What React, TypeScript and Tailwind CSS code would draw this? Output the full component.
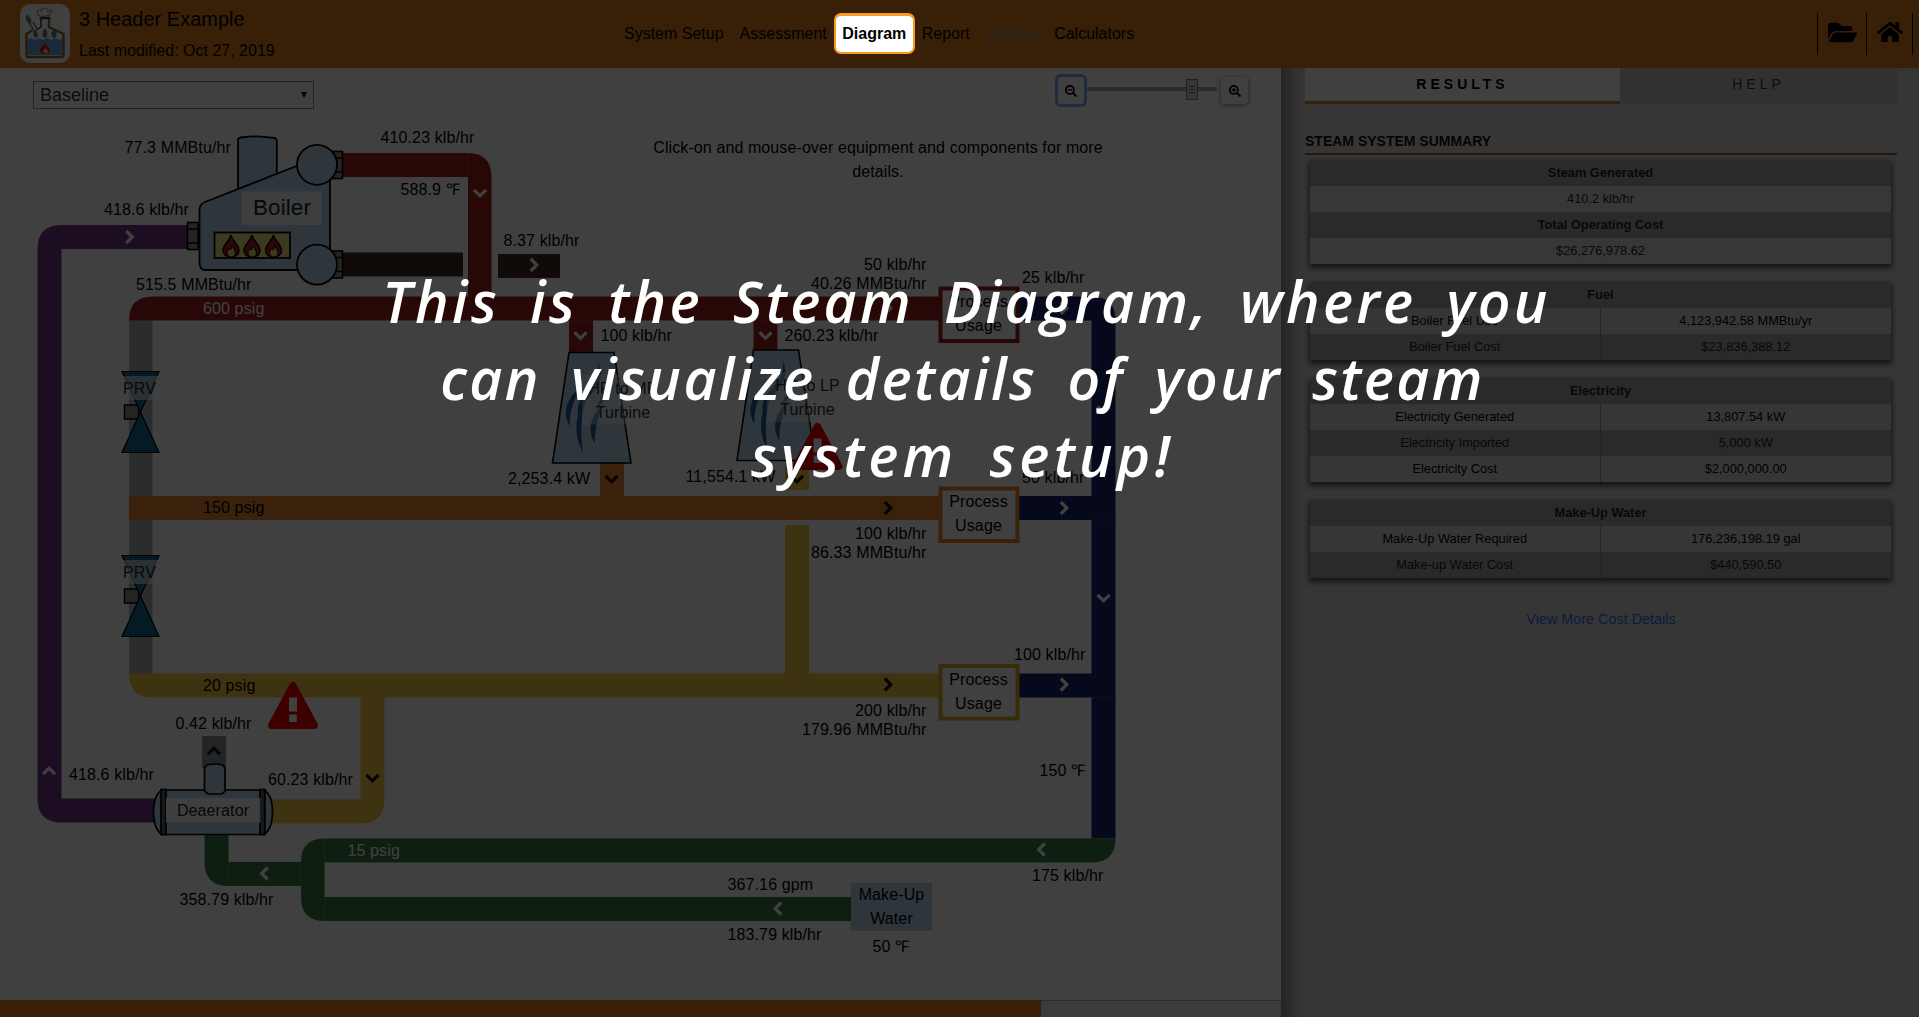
import React from "react";
import { FaFolderOpen, FaHome, FaSearchMinus, FaSearchPlus } from "react-icons/fa";

const RED = "#a0201a";
const PURPLE = "#70348a";
const YELLOW = "#f8cc40";
const ORANGE = "#e8852c";
const NAVY = "#1a2570";
const GREEN = "#387c44";
const BROWN = "#402c20";
const GREY = "#a8b0b5";
const STEEL = "#b6d5ee";

type Dir = "up" | "down" | "left" | "right";
const rotation: Record<Dir, number> = { right: 0, down: 90, left: 180, up: 270 };

function Chevron({ x, y, dir, dark }: { x: number; y: number; dir: Dir; dark?: boolean }) {
  return (
    <path
      d="M-3.2 -6 L2.8 0 L-3.2 6"
      transform={`translate(${x} ${y}) rotate(${rotation[dir]})`}
      fill="none"
      stroke={dark ? "#111" : "#fff"}
      strokeWidth={3.2}
    />
  );
}

function Label({
  x,
  y,
  children,
  anchor = "start",
  fill = "#000",
  size = 16,
}: {
  x: number;
  y: number;
  children: React.ReactNode;
  anchor?: "start" | "middle" | "end";
  fill?: string;
  size?: number;
}) {
  return (
    <text x={x} y={y + size * 0.33} textAnchor={anchor} fill={fill} fontSize={size} letterSpacing={0.12}>
      {children}
    </text>
  );
}

function Valve({ y }: { y: number }) {
  return (
    <g transform={`translate(140.5 ${y})`}>
      <rect x={-16} y={-7} width={14} height={14} fill="#909090" stroke="#000" strokeWidth={1.5} />
      <path d="M-18.5 -40.5H18.5L0 0Z" fill="#1a6898" stroke="#000" strokeWidth={1.2} />
      <path d="M-18.5 40.5H18.5L0 0Z" fill="#1a6898" stroke="#000" strokeWidth={1.2} />
      <rect x={-19} y={-36} width={37} height={24} fill="#fff" fillOpacity={0.6} />
      <Label x={-1} y={-23.5} anchor="middle" fill="#222">
        PRV
      </Label>
    </g>
  );
}

function Turbine({ x, y, name }: { x: number; y: number; name: string }) {
  return (
    <g transform={`translate(${x} ${y})`}>
      <path d="M17 .5H62L79 111H.5Z" fill={STEEL} stroke="#000" strokeWidth={1.6} />
      <g fill="#1d5c94">
        <path d="M46 10C52 24 47 34 39 43C31 52 26 60 29 70C22 56 28 47 35 39C43 30 49 22 46 10Z" />
        <path d="M27 36C16 46 9 60 18 74C17 60 22 50 27 36Z" />
        <path d="M33 50C22 64 22 84 31 100C28 82 29 66 33 50Z" />
        <path d="M50 53C37 66 36 80 43 91C42 78 46 68 50 53Z" />
        <path d="M54 28C58 40 52 50 44 58C46 48 54 42 54 28Z" />
      </g>
      <rect x={30} y={22.5} width={84} height={50} fill="#fff" fillOpacity={0.42} />
      <Label x={71} y={36.5} anchor="middle" fill="#333">
        {name}
      </Label>
      <Label x={71} y={60.5} anchor="middle" fill="#333">
        Turbine
      </Label>
    </g>
  );
}

function Warning({ x, y }: { x: number; y: number }) {
  return (
    <g transform={`translate(${x} ${y})`}>
      <path d="M0 3L21.5 43H-21.5Z" fill="#f00000" stroke="#f00000" strokeWidth={7} strokeLinejoin="round" />
      <rect x={-4} y={15} width={8} height={14} fill="#fff" />
      <rect x={-3.8} y={32} width={7.6} height={7.5} fill="#fff" />
    </g>
  );
}

function Process({ y, color }: { y: number; color: string }) {
  return (
    <g>
      <rect x={940.5} y={y + 2} width={77} height={52.5} fill="#fff" stroke={color} strokeWidth={4} />
      <Label x={978.5} y={y + 15.5} anchor="middle">
        Process
      </Label>
      <Label x={978.5} y={y + 39.5} anchor="middle">
        Usage
      </Label>
    </g>
  );
}

function Flame({ x }: { x: number }) {
  return (
    <g transform={`translate(${x} 246)`}>
      <path
        d="M0 -11C1 -5 8 -2 8 5C8 9 4 11 0 11C-4 11 -8 9 -8 4C-8 -1 -2 -4 0 -11Z"
        fill="#a81c24"
        stroke="#000"
        strokeWidth={1.4}
      />
      <path d="M1 -1C2 2 4.5 4 4.5 7C4.5 10 2 11 0 11C-2 11 -4 9 -4 7C-4 5 -3 4 -2 3C-1 5 1 3 1 -1Z" fill="#f0e060" stroke="#000" strokeWidth={1} />
    </g>
  );
}

function Fitting({ x, y, w = 10.5 }: { x: number; y: number; w?: number }) {
  return (
    <g stroke="#000" strokeWidth={1.6} fill="#8a8f90">
      <rect x={x} y={y} width={w} height={27} />
      <path d={`M${x} ${y + 6.5}h${w}M${x} ${y + 20.5}h${w}`} />
    </g>
  );
}

function Boiler() {
  return (
    <g>
      <Fitting x={187.5} y={222.5} />
      <Fitting x={332} y={151.5} />
      <Fitting x={332} y={251} />
      <path d="M238 200V140Q238 138 241 137.5Q258 135 274 138Q276.8 138.5 276.8 141V190Z" fill={STEEL} stroke="#000" strokeWidth={1.8} />
      <path d="M205 202L317 158L330 175V262L310 270H206Q199.5 270 199.5 263V210Q199.5 204 205 202Z" fill={STEEL} stroke="#000" strokeWidth={1.8} />
      <circle cx={317} cy={164.8} r={20} fill={STEEL} stroke="#000" strokeWidth={1.8} />
      <circle cx={317} cy={264.6} r={20} fill={STEEL} stroke="#000" strokeWidth={1.8} />
      <rect x={214.5} y={232.5} width={75.5} height={25.5} fill="#f0e878" stroke="#000" strokeWidth={1.8} />
      <Flame x={231} />
      <Flame x={252} />
      <Flame x={273.5} />
      <rect x={242} y={191.5} width={80} height={33.5} fill="#fff" fillOpacity={0.8} />
      <Label x={282} y={208} anchor="middle" size={22.4} fill="#222">
        Boiler
      </Label>
    </g>
  );
}

function Deaerator() {
  return (
    <g stroke="#000" strokeWidth={1.7}>
      <path d="M160 790H264Q272.5 795 272.5 812Q272.5 829 264 834.5H162Q153.5 829 153.5 812Q153.5 795 162 790Z" fill={STEEL} />
      <rect x={161} y={789.5} width={5} height={45} fill="#586068" />
      <rect x={260} y={789.5} width={5} height={45} fill="#586068" />
      <path d="M207 765Q215 763 223 765L225 768V791L222 794H208L204.5 791V768Z" fill={STEEL} />
      <g stroke="none">
        <rect x={166} y={798} width={94.5} height={24.5} fill="#fff" fillOpacity={0.9} />
        <Label x={213} y={810.5} anchor="middle" fill="#222">
          Deaerator
        </Label>
      </g>
    </g>
  );
}

function SteamDiagram() {
  return (
    <svg className="absolute left-0 top-0 h-[949px] w-[1281px]" viewBox="0 68 1281 949" fontFamily='"Liberation Sans", Arial, sans-serif'>
      <g>
        <rect x={129} y={320} width={23.5} height={354} fill={GREY} />
        <path d="M187 225H61.5Q37.5 225 37.5 249V798.5Q37.5 822.5 61.5 822.5H154V798.5H61.5V249H187Z" fill={PURPLE} />
        <path d="M342 153H467.5Q491.5 153 491.5 177V297H468V177H342Z" fill={RED} />
        <rect x={342} y={252.5} width={121} height={24} fill={BROWN} />
        <rect x={498} y={254} width={62} height={24} fill={BROWN} />
        <path d="M940 296.5H153Q129 296.5 129 320.5H940Z" fill={RED} />
        <rect x={569} y={320} width={24} height={32} fill={RED} />
        <rect x={753.5} y={320} width={24} height={30} fill={RED} />
        <rect x={129} y={496} width={811} height={24} fill={ORANGE} />
        <rect x={600} y={463} width={24} height={34} fill={ORANGE} />
        <rect x={785} y={461} width={24} height={29} fill={YELLOW} />
        <rect x={785} y={525} width={24} height={149} fill={YELLOW} />
        <path d="M129 673.5H940V697.5H384.5V799.5Q384.5 823.5 360.5 823.5H272V799.5H360.5V697.5H153Q129 697.5 129 673.5Z" fill={YELLOW} />
        <rect x={202} y={736} width={24} height={32} fill="#8a9199" />
        <path d="M1018 296.5H1091.5Q1115.5 296.5 1115.5 320.5V838.5H1091.5V697.5H1018V673.5H1091.5V520H1018V496H1091.5V320.5H1018Z" fill={NAVY} />
        <path
          fillRule="evenodd"
          d="M1115.5 838.5Q1115.5 862.5 1091.5 862.5H324.5V897H852V921H324.5Q301 921 301 897V886H228.5Q204.5 886 204.5 862V834H228.5V862H301Q301 838.5 324.5 838.5Z"
          fill={GREEN}
        />
        <g stroke="#fff" strokeOpacity={0.18} strokeWidth={0.8}>
          <path d="M61.3 225v24M61.3 798.5v24M467.8 153v24M129 320.3h811M1091.5 520h24M1091.5 697.5h24M228.5 862v24M301 862v24M324.5 838v24M324.5 897v24" />
        </g>
      </g>

      <Boiler />
      <Deaerator />
      <Valve y={412} />
      <Valve y={596} />
      <Turbine x={552} y={352} name="HP to MP" />
      <Turbine x={736.5} y={349.5} name="HP to LP" />
      <Process y={286.5} color={RED} />
      <Process y={486.5} color={ORANGE} />
      <Process y={664} color="#d8b020" />
      <rect x={851} y={883} width={81} height={48} fill={STEEL} />
      <Label x={891.5} y={895} anchor="middle">Make-Up</Label>
      <Label x={891.5} y={919} anchor="middle">Water</Label>

      <Chevron x={480} y={193} dir="down" />
      <Chevron x={129.5} y={237} dir="right" />
      <Chevron x={534} y={265} dir="right" />
      <Chevron x={49} y={771} dir="up" />
      <Chevron x={214} y={751} dir="up" dark />
      <Chevron x={372.5} y={778} dir="down" dark />
      <Chevron x={580.5} y={335.5} dir="down" />
      <Chevron x={765.5} y={335.5} dir="down" />
      <Chevron x={611.5} y={479} dir="down" dark />
      <Chevron x={797} y={479} dir="down" dark />
      <Chevron x={888} y={308} dir="right" />
      <Chevron x={888} y={508} dir="right" dark />
      <Chevron x={888} y={684.5} dir="right" dark />
      <Chevron x={1064} y={308} dir="right" />
      <Chevron x={1064} y={508} dir="right" />
      <Chevron x={1064} y={684.5} dir="right" />
      <Chevron x={1103.5} y={409.5} dir="down" />
      <Chevron x={1103.5} y={598} dir="down" />
      <Chevron x={264.5} y={873.5} dir="left" />
      <Chevron x={1041.5} y={849.5} dir="left" />
      <Chevron x={778} y={908.5} dir="left" />

      <Label x={124.5} y={147.5}>77.3 MMBtu/hr</Label>
      <Label x={104} y={210}>418.6 klb/hr</Label>
      <Label x={380.5} y={138}>410.23 klb/hr</Label>
      <Label x={400.5} y={190}>
        588.9 <tspan fontFamily='"Liberation Serif"'>℉</tspan>
      </Label>
      <Label x={503.5} y={241}>8.37 klb/hr</Label>
      <Label x={136} y={284.5}>515.5 MMBtu/hr</Label>
      <Label x={203} y={309} fill="#fff">600 psig</Label>
      <Label x={203} y={508}>150 psig</Label>
      <Label x={203} y={685.5}>20 psig</Label>
      <Label x={347.5} y={851} fill="#fff">15 psig</Label>
      <Label x={175.5} y={724}>0.42 klb/hr</Label>
      <Label x={69} y={774.5}>418.6 klb/hr</Label>
      <Label x={268} y={779.5}>60.23 klb/hr</Label>
      <Label x={179.5} y={899.5}>358.79 klb/hr</Label>
      <Label x={508} y={478.5}>2,253.4 kW</Label>
      <Label x={685.5} y={476.5}>11,554.1 kW</Label>
      <Label x={600.5} y={336}>100 klb/hr</Label>
      <Label x={784.5} y={336}>260.23 klb/hr</Label>
      <Label x={926.5} y={265} anchor="end">50 klb/hr</Label>
      <Label x={926.5} y={284} anchor="end">40.26 MMBtu/hr</Label>
      <Label x={926.5} y={533.5} anchor="end">100 klb/hr</Label>
      <Label x={926.5} y={552.5} anchor="end">86.33 MMBtu/hr</Label>
      <Label x={926.5} y={710.5} anchor="end">200 klb/hr</Label>
      <Label x={926.5} y={729.5} anchor="end">179.96 MMBtu/hr</Label>
      <Label x={1022} y={278}>25 klb/hr</Label>
      <Label x={1022} y={477.5}>50 klb/hr</Label>
      <Label x={1014} y={654.5}>100 klb/hr</Label>
      <Label x={1039.5} y={771}>
        150 <tspan fontFamily='"Liberation Serif"'>℉</tspan>
      </Label>
      <Label x={1032} y={875.5}>175 klb/hr</Label>
      <Label x={727.5} y={884.5}>367.16 gpm</Label>
      <Label x={727.5} y={934.5}>183.79 klb/hr</Label>
      <Label x={872.5} y={947}>
        50 <tspan fontFamily='"Liberation Serif"'>℉</tspan>
      </Label>
      <Warning x={293} y={682.5} />
      <Warning x={817.5} y={423.5} />
    </svg>
  );
}

function Logo() {
  return (
    <div className="mt-1 h-[59px] w-[50px] rounded-[10px] bg-white">
      <svg viewBox="0 0 50 59" className="h-full w-full">
        <path d="M8 35L12 34L15 36L19 34L23 36L27 34L31 36L35 34L39 36L42 35V51H8Z" fill="#6aa5e0" />
        <path d="M18 9C15 7 19 4 21 7C22 3 27 3 28 7C31 4 34 7 30 9C31 13 27 11 25 12C21 13 17 12 18 9Z" fill="none" stroke="#9a9a9a" strokeWidth={1.2} />
        <path d="M21 14H29V23L43.5 30V51Q43.5 53 42 53H8Q6.5 53 6.5 51V30L12 26.5" fill="none" stroke="#8a6430" strokeWidth={2.4} />
        <path d="M19.5 14H30.5M21 14V23L16.5 26" fill="none" stroke="#333" strokeWidth={1.4} />
        <path d="M10 20L14 27M13 18L17 25" stroke="#555" strokeWidth={1.2} />
        <g fill="#5f7f9f" stroke="#444" strokeWidth={0.6}>
          <path d="M7 11C11 14 12 17 10 20C6 17 5 14 7 11Z" />
          <path d="M15 26C18 29 18 32 16 34C13 31 13 29 15 26ZM25 25C28 29 27 32 25 34C22 31 22 29 25 25ZM34 26C37 29 37 32 34 34C31 31 31 29 34 26Z" />
        </g>
        <path d="M25 38C26 42 30 43 30 46C30 49 27 50 25 50C22 50 20 49 20 45C20 43 24 42 25 38Z" fill="#d02020" />
        <path d="M26 43C26 46 28 46 28 48C28 50 24 50 23 48C23 46 25 46 26 43Z" fill="#f0d060" />
      </svg>
    </div>
  );
}

function Header() {
  return (
    <header className="flex h-[68px] shrink-0 items-start bg-[#e08020] pl-5">
      <Logo />
      <div className="ml-[9px] flex w-[536px] flex-col pt-1">
        <div className="text-[20px] leading-[30px]">3 Header Example</div>
        <div className="mt-[5px] text-[16px] leading-6">Last modified: Oct 27, 2019</div>
      </div>
      <nav className="flex items-center pt-[13px] text-[16px] leading-6">
        <span className="px-[9px]">System Setup</span>
        <span className="px-[7px]">Assessment</span>
        <span className="relative z-20 flex h-[41px] w-[81px] items-center justify-center rounded-[7px] border-2 border-t-[3px] border-[#f79a1e] bg-white font-bold">
          Diagram
        </span>
        <span className="px-[7px]">Report</span>
        <span className="px-[8px] text-[#868e96]">Sankey</span>
        <span className="px-[8px]">Calculators</span>
      </nav>
      <div className="ml-auto mr-[6px] mt-[13px] flex h-[42px] border-x border-black">
        <span className="flex w-[49px] items-center justify-center border-r border-black">
          <FaFolderOpen className="h-[29px] w-[29px] -translate-y-0.5" />
        </span>
        <span className="flex w-[45px] items-center justify-center">
          <FaHome className="h-[26px] w-[26px] -translate-y-0.5" />
        </span>
      </div>
    </header>
  );
}

type Row = [string, string?];

function Table({ title, rows }: { title: string; rows: Row[] }) {
  return (
    <div className="mb-[18px] ml-[5px] mr-[6px] text-center text-[12.8px] leading-[26px] text-[#222] shadow-[0_3px_6px_1px_rgba(0,0,0,0.65)]">
      <div className="bg-[#a8a8a8] font-bold">{title}</div>
      {rows.map(([name, value], i) =>
        value === undefined ? (
          <div key={name} className={i % 2 ? "bg-[#a8a8a8] font-bold" : "bg-[#dcdcdc]"}>
            {name}
          </div>
        ) : (
          <div key={name} className={`grid h-[26px] grid-cols-2 ${i % 2 ? "bg-[#a8a8a8]" : "bg-[#d8d8d8] text-black"}`}>
            <div className="border-r border-[#999]">{name}</div>
            <div>{value}</div>
          </div>
        )
      )}
    </div>
  );
}

function ResultsPanel() {
  return (
    <aside className="w-[638px] bg-[#d8d8d8] pl-6 pr-[22px] shadow-[inset_18px_0_16px_-8px_rgba(0,0,0,0.35)]">
      <div className="flex h-9 text-center text-[14px] leading-[32px] tracking-[4px]">
        <div className="w-[315px] border-b-[3px] border-[#e08020] bg-white font-bold">RESULTS</div>
        <div className="flex-1 bg-[#c4c4c4] text-[#333]">HELP</div>
      </div>
      <h2 className="mb-[5px] mt-[26px] border-b-2 border-[#a05c18] pb-px text-[14px] font-bold leading-[22px] text-[#111]">
        STEAM SYSTEM SUMMARY
      </h2>
      <Table title="Steam Generated" rows={[["410.2 klb/hr"], ["Total Operating Cost"], ["$26,276,978.62"]]} />
      <Table title="Fuel" rows={[["Boiler Fuel Use", "4,123,942.58 MMBtu/yr"], ["Boiler Fuel Cost", "$23,836,388.12"]]} />
      <Table
        title="Electricity"
        rows={[
          ["Electricity Generated", "13,807.54 kW"],
          ["Electricity Imported", "5,000 kW"],
          ["Electricity Cost", "$2,000,000.00"],
        ]}
      />
      <Table title="Make-Up Water" rows={[["Make-Up Water Required", "176,236,198.19 gal"], ["Make-up Water Cost", "$440,590.50"]]} />
      <div className="mt-[30px] text-center text-[14.4px] leading-[22px] text-[#3868f0]">View More Cost Details</div>
    </aside>
  );
}

function Toolbar() {
  return (
    <div className="relative flex items-start justify-between pl-[33px] pr-[33px] pt-[9px]">
      <div className="mt-1 flex h-7 w-[281px] items-center justify-between border border-[#8a8a8a] px-[6px] text-[18px] text-[#333]">
        <span>Baseline</span>
        <svg viewBox="0 0 8 8" className="h-[6px] w-[6px]">
          <path d="M0 0H8L4 8Z" />
        </svg>
      </div>
      <div className="flex items-center">
        <span className="flex h-[27px] w-[26px] items-center justify-center rounded-[3px] bg-white shadow-[0_0_0_3px_#80a8ff]">
          <FaSearchMinus className="h-3 w-3" />
        </span>
        <div className="relative ml-[3px] mr-1 h-1 w-[130px] -translate-y-0.5 bg-[#b8b0a8]">
          <span className="absolute left-[99px] top-[-8px] flex h-[21px] w-3 flex-col items-center justify-center gap-[2px] border border-[#888078] bg-[#ddd8d0]">
            <i className="h-px w-1.5 bg-[#666]" />
            <i className="h-px w-1.5 bg-[#666]" />
            <i className="h-px w-1.5 bg-[#666]" />
          </span>
        </div>
        <span className="flex h-[27px] w-[27px] items-center justify-center rounded-[3px] bg-white shadow-[0_1px_4px_rgba(0,0,0,0.5)]">
          <FaSearchPlus className="h-3 w-3" />
        </span>
      </div>
    </div>
  );
}

export default function App() {
  return (
    <div className="relative flex h-[1017px] w-[1919px] flex-col overflow-hidden bg-white font-['Liberation_Sans',Arial,sans-serif] text-black">
      <Header />
      <div className="flex min-h-0 flex-1">
        <main className="relative flex w-[1281px] flex-col">
          <SteamDiagram />
          <Toolbar />
          <p className="ml-[638px] mt-[27px] w-[480px] text-center text-[16px] leading-6 tracking-[0.1px]">
            Click-on and mouse-over equipment and components for more details.
          </p>
          <div className="relative mt-auto flex h-[17px] border-t border-[#aaa] bg-[#ececec]">
            <div className="-mt-px w-[1041px] bg-[#e08020]" />
          </div>
        </main>
        <ResultsPanel />
      </div>
      <div className="absolute inset-0 z-10 bg-black/75" />
      <div className="absolute left-0 top-[263px] z-30 w-full whitespace-nowrap text-center font-['Segoe_Print','Open_Sans',sans-serif] text-[57px] font-semibold italic leading-[77px] text-white">
        <div className="pl-[14px] tracking-[3.3px] [word-spacing:12px]">This is the Steam Diagram, where you</div>
        <div className="pl-[6px] tracking-[2.4px] [word-spacing:13px]">can visualize details of your steam</div>
        <div className="pl-[6px] tracking-[4.2px] [word-spacing:13px]">system setup!</div>
      </div>
    </div>
  );
}
